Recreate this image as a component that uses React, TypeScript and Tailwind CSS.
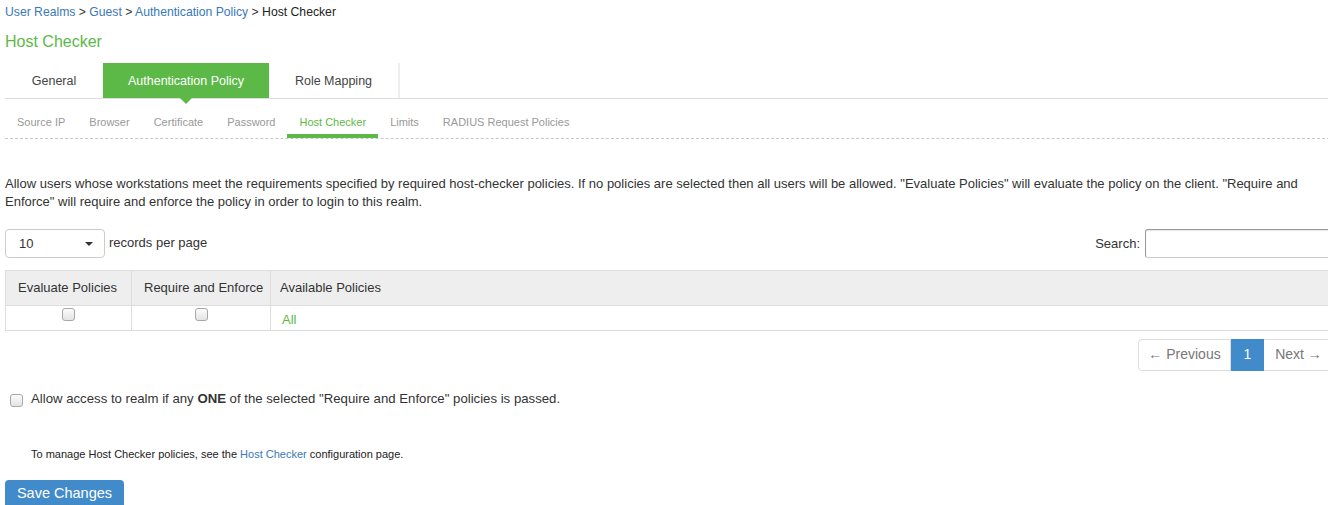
import { useState } from "react";

const subTabs = [
  "Source IP",
  "Browser",
  "Certificate",
  "Password",
  "Host Checker",
  "Limits",
  "RADIUS Request Policies",
];

function Checkbox({ className = "" }: { className?: string }) {
  return (
    <span
      className={`inline-block h-[13px] w-[13px] rounded-[3px] border border-[#a8a8a8] bg-gradient-to-b from-[#fcfcfc] to-[#e4e4e4] ${className}`}
    />
  );
}

export default function App() {
  const [perPage] = useState("10");

  return (
    <div className="h-[505px] w-[1328px] overflow-hidden bg-white font-['Liberation_Sans',Arial,sans-serif] text-[#333]">
      <div className="w-[1345px] pl-[5px]">
        {/* Breadcrumb */}
        <div className="pt-[4px] text-[12.2px] leading-[16px]">
          <span className="text-[#3a78b8]">User Realms</span>
          <span> &gt; </span>
          <span className="text-[#3a78b8]">Guest</span>
          <span> &gt; </span>
          <span className="text-[#3a78b8]">Authentication Policy</span>
          <span> &gt; </span>
          <span className="text-[#222]">Host Checker</span>
        </div>

        <h1 className="mt-[12px] text-[16px] leading-[20px] text-[#5cb947]">Host Checker</h1>

        {/* Main tabs */}
        <div className="mt-[11px] flex h-[36px] border-b border-[#ddd] text-[12.5px]">
          <div className="flex w-[98px] items-center justify-center pt-[2px] text-[#444]">General</div>
          <div className="relative flex w-[166px] items-center justify-center bg-[#5cb947] pt-[2px] text-white">
            Authentication Policy
            <span className="absolute -bottom-[6px] left-1/2 h-0 w-0 -translate-x-1/2 border-x-[6px] border-t-[6px] border-x-transparent border-t-[#5cb947]" />
          </div>
          <div className="flex w-[131px] items-center justify-center border-r-[2px] border-[#eee] pt-[2px] text-[#444]">
            Role Mapping
          </div>
        </div>

        {/* Sub tabs */}
        <div className="flex h-[40px] border-b border-dashed border-[#c8c8c8] text-[11px] text-[#999]">
          {subTabs.map((t) => {
            const active = t === "Host Checker";
            return (
              <div
                key={t}
                className={`flex items-center px-[12px] pt-[12px] ${
                  active ? "border-b-[4px] border-[#5cb947] text-[#5cb947]" : "border-b-[4px] border-transparent"
                }`}
              >
                {t}
              </div>
            );
          })}
        </div>

        {/* Description */}
        <p className="mt-[36px] w-[1320px] text-[13px] leading-[18px] text-[#333]">
          Allow users whose workstations meet the requirements specified by required host-checker policies. If no
          policies are selected then all users will be allowed. "Evaluate Policies" will evaluate the policy on the
          client. "Require and Enforce" will require and enforce the policy in order to login to this realm.
        </p>

        {/* Length + search */}
        <div className="mt-[18px] flex h-[29px] items-start justify-between">
          <div className="flex items-start">
            <div className="flex h-[29px] w-[100px] items-center justify-between rounded-[4px] border border-[#ccc] px-[13px] text-[13px]">
              <span>{perPage}</span>
              <span className="mr-[-2px] h-0 w-0 border-x-[4px] border-t-[4px] border-x-transparent border-t-[#333]" />
            </div>
            <span className="ml-[4px] pt-[4px] text-[13px]">records per page</span>
          </div>
          <div className="flex items-center">
            <span className="mr-[5px] text-[13px]">Search:</span>
            <div className="h-[29px] w-[200px] rounded-[3px] border border-[#999] border-b-[#ccc] shadow-[inset_0_1px_1px_rgba(0,0,0,0.1)]" />
          </div>
        </div>

        {/* Table */}
        <table className="mt-[12px] w-full table-fixed border-collapse text-[13px]">
          <thead>
            <tr className="h-[35px] bg-[#eee]">
              <th className="w-[126px] whitespace-nowrap border border-[#ddd] px-[12px] text-left font-normal">
                Evaluate Policies
              </th>
              <th className="w-[139px] whitespace-nowrap border border-[#ddd] pl-[12px] text-left font-normal">
                Require and Enforce
              </th>
              <th className="border border-[#ddd] px-[9px] text-left font-normal">Available Policies</th>
            </tr>
          </thead>
          <tbody>
            <tr className="h-[24px]">
              <td className="border border-[#ddd] text-center align-top">
                <Checkbox className="mt-[2px]" />
              </td>
              <td className="border border-[#ddd] text-center align-top">
                <Checkbox className="mt-[2px]" />
              </td>
              <td className="border border-[#ddd] px-[11px] pt-[4px] align-top text-[#5cb947]">All</td>
            </tr>
          </tbody>
        </table>

        {/* Pagination */}
        <div className="mt-[8px] flex justify-end pr-[11px]">
          <div className="flex h-[32px] text-[14px]">
            <div className="flex w-[93px] items-center justify-center rounded-l-[4px] border border-[#ddd] text-[#777]">
              ← Previous
            </div>
            <div className="flex w-[33px] items-center justify-center bg-[#428bca] text-white">1</div>
            <div className="flex w-[70px] items-center justify-center border border-l-0 border-[#ddd] text-[#777]">
              Next →
            </div>
          </div>
        </div>

        {/* Allow access */}
        <div className="mt-[18px] flex items-center">
          <Checkbox className="ml-[5px] mt-[4px]" />
          <span className="ml-[8px] text-[13.2px]">
            Allow access to realm if any <b>ONE</b> of the selected "Require and Enforce" policies is passed.
          </span>
        </div>

        <p className="ml-[26px] mt-[38px] text-[11px] text-[#222]">
          To manage Host Checker policies, see the <span className="text-[#3a78b8]">Host Checker</span> configuration
          page.
        </p>

        <button className="mt-[17px] h-[28px] w-[119px] rounded-[4px] bg-[#428bca] text-[14.5px] text-white">
          Save Changes
        </button>
      </div>
    </div>
  );
}
